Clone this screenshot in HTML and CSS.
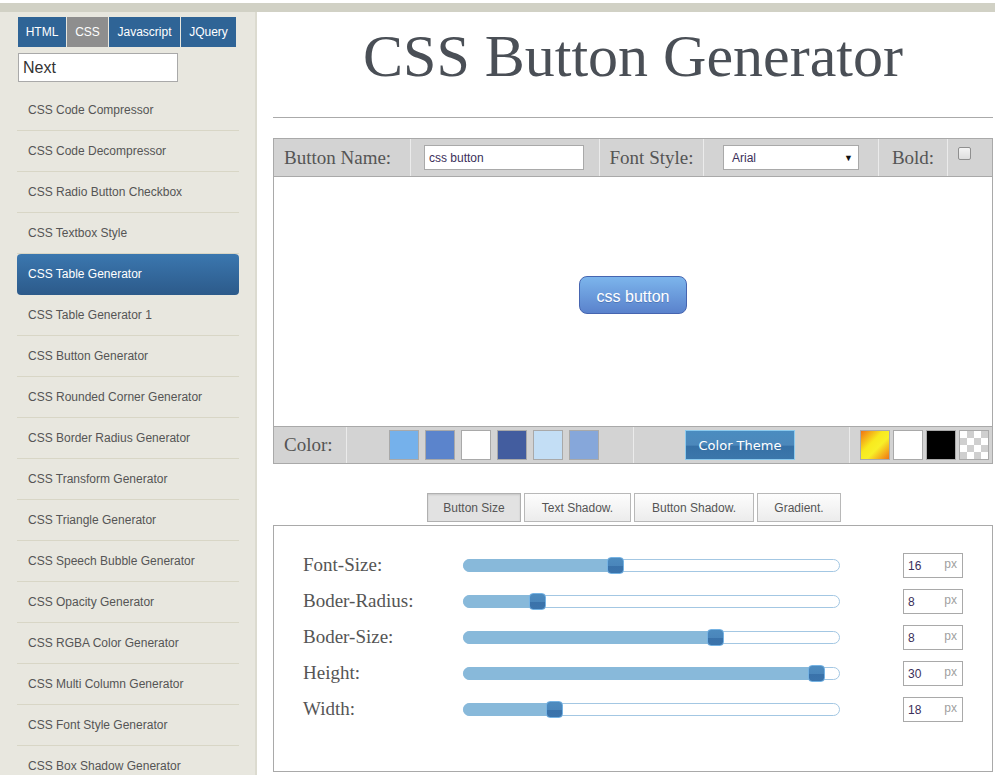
FILE: index.html
```html
<!DOCTYPE html>
<html>
<head>
<meta charset="utf-8">
<title>CSS Button Generator</title>
<link rel="stylesheet" href="styles.css">
</head>
<body>
<div class="topbar"></div>
<div class="layout">
  <aside class="sidebar">
    <nav class="tabs">
      <span class="tab tab-html">HTML</span>
      <span class="tab tab-css">CSS</span>
      <span class="tab tab-js">Javascript</span>
      <span class="tab tab-jq">JQuery</span>
    </nav>
    <input class="search" type="text" value="Next">
    <ul class="menu">
      <li>CSS Code Compressor</li>
      <li>CSS Code Decompressor</li>
      <li>CSS Radio Button Checkbox</li>
      <li>CSS Textbox Style</li>
      <li class="active">CSS Table Generator</li>
      <li>CSS Table Generator 1</li>
      <li>CSS Button Generator</li>
      <li>CSS Rounded Corner Generator</li>
      <li>CSS Border Radius Generator</li>
      <li>CSS Transform Generator</li>
      <li>CSS Triangle Generator</li>
      <li>CSS Speech Bubble Generator</li>
      <li>CSS Opacity Generator</li>
      <li>CSS RGBA Color Generator</li>
      <li>CSS Multi Column Generator</li>
      <li>CSS Font Style Generator</li>
      <li>CSS Box Shadow Generator</li>
    </ul>
  </aside>
  <main class="main">
    <h1 class="title">CSS Button Generator</h1>
    <hr class="rule">
    <section class="panel">
      <div class="toolbar">
        <div class="cell cell-name label-left">Button Name:</div>
        <div class="cell cell-input"><input class="name-input" type="text" value="css button"></div>
        <div class="cell cell-font">Font Style:</div>
        <div class="cell cell-select"><div class="select"><span>Arial</span><span class="arrow">&#9660;</span></div></div>
        <div class="cell cell-bold">Bold:</div>
        <div class="cell cell-check"><span class="checkbox"></span></div>
      </div>
      <div class="preview">
        <button class="demo">css button</button>
      </div>
      <div class="colorbar">
        <div class="cell ccell-label label-left">Color:</div>
        <div class="cell ccell-swatches">
          <span class="sw" style="background:#75b1eb"></span>
          <span class="sw" style="background:#5b84cc"></span>
          <span class="sw" style="background:#ffffff"></span>
          <span class="sw" style="background:#435d9f"></span>
          <span class="sw" style="background:#c3def5"></span>
          <span class="sw" style="background:#86a7da"></span>
        </div>
        <div class="cell ccell-theme"><span class="theme-btn">Color Theme</span></div>
        <div class="ccell-extra">
          <span class="sw sw-grad"></span>
          <span class="sw sw-white"></span>
          <span class="sw sw-black"></span>
          <span class="sw sw-check"></span>
        </div>
      </div>
    </section>
    <div class="subtabs">
      <span class="subtab st-size active">Button Size</span>
      <span class="subtab st-text">Text Shadow.</span>
      <span class="subtab st-btn">Button Shadow.</span>
      <span class="subtab st-grad">Gradient.</span>
    </div>
    <section class="settings">
      <div class="row">
        <span class="row-label">Font-Size:</span>
        <div class="track"><span class="fill" style="width:152px"></span><span class="handle" style="left:143px"></span></div>
        <div class="num"><span class="val">16</span><span class="unit">px</span></div>
      </div>
      <div class="row">
        <span class="row-label">Boder-Radius:</span>
        <div class="track"><span class="fill" style="width:74px"></span><span class="handle" style="left:65px"></span></div>
        <div class="num"><span class="val">8</span><span class="unit">px</span></div>
      </div>
      <div class="row">
        <span class="row-label">Boder-Size:</span>
        <div class="track"><span class="fill" style="width:252px"></span><span class="handle" style="left:243px"></span></div>
        <div class="num"><span class="val">8</span><span class="unit">px</span></div>
      </div>
      <div class="row">
        <span class="row-label">Height:</span>
        <div class="track"><span class="fill" style="width:353px"></span><span class="handle" style="left:344px"></span></div>
        <div class="num"><span class="val">30</span><span class="unit">px</span></div>
      </div>
      <div class="row">
        <span class="row-label">Width:</span>
        <div class="track"><span class="fill" style="width:91px"></span><span class="handle" style="left:82px"></span></div>
        <div class="num"><span class="val">18</span><span class="unit">px</span></div>
      </div>
    </section>
  </main>
</div>
</body>
</html>
```

FILE: styles.css
```css
* { box-sizing: border-box; }

body {
  margin: 0;
  background: #fff;
  font-family: "Liberation Sans", Arial, sans-serif;
}

.topbar {
  height: 9px;
  margin-top: 3px;
  background: #d1d1c5;
}

.layout {
  display: flex;
  min-height: 763px;
}

/* ---------- sidebar ---------- */
.sidebar {
  width: 257px;
  flex: none;
  background: #e8e7df;
  border-right: 2px solid #dcdbd0;
  padding: 5px 16px 0 17px;
}

.tabs {
  display: flex;
  gap: 1px;
  margin-left: 1px;
}

.tab {
  height: 30px;
  display: flex;
  align-items: center;
  justify-content: center;
  color: #fff;
  font-size: 12px;
  background: #2f6496;
}
.tab-html { width: 48px; }
.tab-css { width: 41px; background: #8e8e8e; }
.tab-js { width: 71px; }
.tab-jq { width: 55px; }

.search {
  display: block;
  width: 160px;
  height: 29px;
  margin: 6px 0 0 1px;
  border: 1px solid #a9a9a9;
  padding: 0 4px;
  font: 16px "Liberation Sans", Arial, sans-serif;
  color: #333;
  background: #fff;
}

.menu {
  list-style: none;
  margin: 8px 0 0;
  padding: 0;
  width: 222px;
}

.menu li {
  height: 41px;
  line-height: 40px;
  padding-left: 11px;
  border-bottom: 1px solid #d8d6c6;
  font-size: 12px;
  color: #555;
  white-space: nowrap;
}

.menu li.active {
  border-bottom: none;
  line-height: 41px;
  border-radius: 4px;
  color: #fff;
  background: linear-gradient(#3b77af, #2c5a8a);
}

/* ---------- main ---------- */
.main {
  flex: 1;
  padding: 0 2px 0 16px;
}

.title {
  width: 720px;
  margin: 10px 0 0;
  font: normal 60px/69px "Liberation Serif", "Times New Roman", serif;
  color: #4a4f56;
  text-align: center;
}

.rule {
  width: 720px;
  height: 1px;
  margin: 26px 0 20px;
  border: 0;
  background: #aaa;
}

.panel {
  width: 720px;
  border: 1px solid #a9a9a9;
}

.toolbar {
  display: grid;
  grid-template-columns: 137px 189px 104px 175px 69px 1fr;
  height: 38px;
  background: #d3d3d3;
  border-bottom: 1px solid #a9a9a9;
}

.cell {
  border-right: 1px solid #ebebeb;
  display: flex;
  align-items: center;
  justify-content: center;
  font: 19px "Liberation Serif", "Times New Roman", serif;
  color: #555;
}

.label-left {
  justify-content: flex-start;
  padding-left: 10px;
}

.cell-input { justify-content: flex-start; padding-left: 13px; }

.name-input {
  width: 160px;
  height: 25px;
  border: 1px solid #a9a9a9;
  padding: 0 4px;
  font: 12px "Liberation Sans", Arial, sans-serif;
  color: #3b2f5a;
  background: #fff;
}

.cell-select { justify-content: flex-start; padding-left: 19px; }

.select {
  width: 136px;
  height: 25px;
  border: 1px solid #a9a9a9;
  background: #fff;
  display: flex;
  align-items: center;
  justify-content: space-between;
  padding: 0 5px 0 8px;
  font: 12px "Liberation Sans", Arial, sans-serif;
  color: #3b2f5a;
}
.select .arrow { font-size: 9px; color: #111; }

.cell-check {
  border-right: none;
  align-items: flex-start;
  justify-content: flex-start;
  padding: 8px 0 0 10px;
}

.checkbox {
  width: 13px;
  height: 13px;
  border: 1px solid #8f8f8f;
  border-radius: 2px;
  background: linear-gradient(#f4f4f4, #dedede);
}

.preview {
  height: 250px;
  border-bottom: 1px solid #a9a9a9;
  background: #fff;
  display: flex;
  justify-content: center;
  align-items: flex-start;
  padding-top: 99px;
}

.demo {
  width: 108px;
  height: 38px;
  border: 1px solid #4665b0;
  border-radius: 8px;
  background: linear-gradient(#7cb5ec, #5a82cc);
  color: #fff;
  font: 16px "Liberation Sans", Arial, sans-serif;
  text-shadow: 0 1px 0 rgba(40, 70, 130, 0.35);
  padding: 3px 0 0;
}

.colorbar {
  display: grid;
  grid-template-columns: 73px 287px 216px 1fr;
  height: 36px;
  background: #d3d3d3;
}

.ccell-swatches {
  justify-content: flex-start;
  padding-left: 42px;
  gap: 6px;
}

.sw {
  width: 30px;
  height: 30px;
  border: 1px solid #a9a9a9;
  flex: none;
}

.ccell-theme { justify-content: flex-start; padding-left: 51px; }

.theme-btn {
  width: 110px;
  height: 30px;
  border: 1px solid #8ccaee;
  background: linear-gradient(#4a8cc0 0%, #4c88bb 50%, #3670a6 55%, #3b77ab 100%);
  color: #fff;
  font: 13px "DejaVu Sans", Verdana, sans-serif;
  display: flex;
  align-items: center;
  justify-content: center;
}

.ccell-extra {
  display: flex;
  align-items: center;
  gap: 3px;
  padding-left: 10px;
}

.sw-grad { background: linear-gradient(135deg, #f07414 0%, #f8ea1e 40%, #f8f028 60%, #f07414 100%); }
.sw-white { background: #fff; }
.sw-black { background: #000; }
.sw-check {
  background-color: #fff;
  background-image:
    linear-gradient(45deg, #cfcfcf 25%, transparent 25%, transparent 75%, #cfcfcf 75%),
    linear-gradient(45deg, #cfcfcf 25%, transparent 25%, transparent 75%, #cfcfcf 75%);
  background-size: 14px 14px;
  background-position: 0 0, 7px 7px;
}

/* ---------- sub tabs ---------- */
.subtabs {
  width: 720px;
  display: flex;
  gap: 3px;
  margin-top: 29px;
  padding-left: 154px;
}

.subtab {
  height: 29px;
  border: 1px solid #b8b8b8;
  background: linear-gradient(#fdfdfd, #ececec);
  color: #555;
  font-size: 12px;
  display: flex;
  align-items: center;
  justify-content: center;
}
.st-size { width: 94px; }
.st-text { width: 107px; }
.st-btn { width: 120px; }
.st-grad { width: 84px; }

.subtab.active {
  background: #e2e2e2;
  box-shadow: inset 0 1px 2px rgba(0, 0, 0, 0.12);
  border-color: #b0b0b0;
}

.settings {
  width: 720px;
  height: 247px;
  margin-top: 3px;
  border: 1px solid #a9a9a9;
  padding: 21px 0 0 29px;
}

.row {
  display: grid;
  grid-template-columns: 160px 377px 60px;
  height: 36px;
  align-items: center;
}

.row .num { margin-left: 63px; }

.row-label {
  font: 19px "Liberation Serif", "Times New Roman", serif;
  color: #555;
}

.track {
  position: relative;
  height: 13px;
  border: 1px solid #a3c7e3;
  border-radius: 7px;
  background: #fff;
}

.fill {
  position: absolute;
  left: -1px;
  top: -1px;
  bottom: -1px;
  background: #88b9da;
  border-radius: 7px 0 0 7px;
}

.handle {
  position: absolute;
  top: -3px;
  width: 17px;
  height: 17px;
  border: 1px solid #76b3e3;
  border-radius: 4px;
  background: linear-gradient(#4d8bbf 0%, #4a86bb 50%, #3a72aa 52%, #3b74ac 100%);
}

.num {
  width: 60px;
  height: 25px;
  border: 1px solid #a9a9a9;
  display: flex;
  justify-content: space-between;
  align-items: center;
  padding: 0 5px 0 4px;
  font-size: 12px;
}
.num .val { color: #3b2f5a; margin-top: 2px; }
.num .unit { color: #a0a0a0; margin-top: -3px; }
```
